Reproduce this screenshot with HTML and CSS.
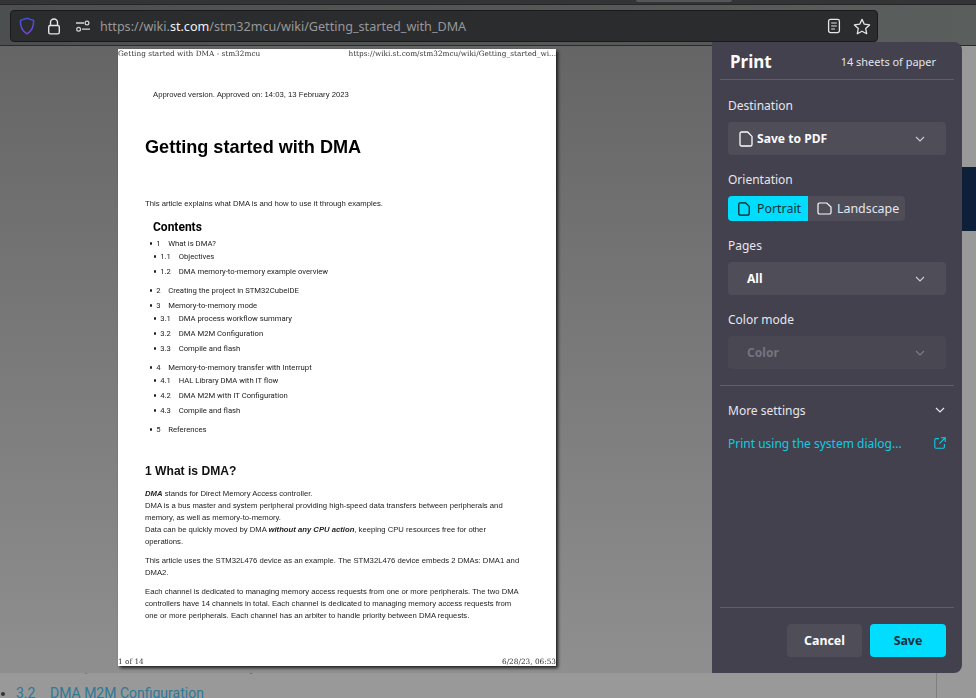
FILE: index.html
```html
<!DOCTYPE HTML>
<html>
<head>
    <meta charset="UTF-8">
    <meta name="viewport" content="width=device-width, initial-scale=1.0">
    <title>Getting started with DMA - stm32mcu</title>
    <link rel="stylesheet" href="styles.css">
</head>
<body>
    <div class="tabstrip"><div class="tab-edge"></div></div>

    <div class="toolbar">
        <div class="urlbar">
            <svg class="shield" width="16" height="18" viewBox="0 0 16 18">
                <defs>
                    <linearGradient id="shieldGrad" x1="0" y1="0" x2="0" y2="1">
                        <stop offset="0" stop-color="#3a52d8"/>
                        <stop offset="1" stop-color="#7a45d8"/>
                    </linearGradient>
                </defs>
                <path d="M8 1.2 L14.6 3.4 C14.8 9.5 12.8 14 8 16.8 C3.2 14 1.2 9.5 1.4 3.4 Z" fill="none" stroke="url(#shieldGrad)" stroke-width="1.5" stroke-linejoin="round"/>
            </svg>
            <svg class="lock" width="14" height="17" viewBox="0 0 14 17">
                <path d="M3.5 7.5 V4.5 a3.5 3.5 0 0 1 7 0 V7.5" fill="none" stroke="#e6e6e8" stroke-width="1.4"/>
                <rect x="1.7" y="7.5" width="10.6" height="8.4" rx="1.6" fill="none" stroke="#e6e6e8" stroke-width="1.4"/>
            </svg>
            <svg class="sliders" width="16" height="12" viewBox="0 0 16 12">
                <path d="M1 3 H9 M7 9.2 H15" fill="none" stroke="#d6d6d8" stroke-width="1.3"/>
                <circle cx="12" cy="3" r="1.9" fill="none" stroke="#d6d6d8" stroke-width="1.2"/>
                <circle cx="3.6" cy="9.2" r="1.9" fill="none" stroke="#d6d6d8" stroke-width="1.2"/>
            </svg>
            <div class="url">https://wiki.<span class="url-host">st.com</span>/stm32mcu/wiki/Getting_started_with_DMA</div>
            <svg class="reader" width="14" height="16" viewBox="0 0 14 16">
                <rect x="1.6" y="1.4" width="10.8" height="13.2" rx="1.8" fill="none" stroke="#e6e6e8" stroke-width="1.3"/>
                <path d="M4.2 5 H9.8 M4.2 8 H9.8 M4.2 11 H8" stroke="#e6e6e8" stroke-width="1.2"/>
            </svg>
            <svg class="star" width="18" height="17" viewBox="0 0 18 17">
                <path d="M9 1.4 L11.3 6.2 L16.6 6.9 L12.7 10.5 L13.7 15.7 L9 13.2 L4.3 15.7 L5.3 10.5 L1.4 6.9 L6.7 6.2 Z" fill="none" stroke="#e6e6e8" stroke-width="1.3" stroke-linejoin="round"/>
            </svg>
        </div>
    </div>

    <div class="wiki">
        <div class="wiki-content">
            <ul class="wiki-list">
                <li><span class="wiki-num">3.1</span>DMA process workflow summary</li>
                <li><span class="wiki-num">3.2</span>DMA M2M Configuration</li>
            </ul>
        </div>
        <div class="wiki-side"><div class="wiki-banner"></div></div>
    </div>

    <div class="dialog">
        <div class="preview">
            <div class="sheet">
                <div class="sheet-head">
                    <span>Getting started with DMA - stm32mcu</span>
                    <span>https://wiki.st.com/stm32mcu/wiki/Getting_started_wi...</span>
                </div>
                <div class="sheet-body">
                    <p class="approved">Approved version. Approved on: 14:03, 13 February 2023</p>
                    <h1>Getting started with DMA</h1>
                    <p class="intro">This article explains what DMA is and how to use it through examples.</p>

                    <h2 class="toc-title">Contents</h2>
                    <ul class="toc">
                        <li class="toc-top"><span>1</span>What is DMA?</li>
                        <li class="toc-sub"><span>1.1</span>Objectives</li>
                        <li class="toc-sub"><span>1.2</span>DMA memory-to-memory example overview</li>
                        <li class="toc-top gap"><span>2</span>Creating the project in STM32CubeIDE</li>
                        <li class="toc-top next"><span>3</span>Memory-to-memory mode</li>
                        <li class="toc-sub"><span>3.1</span>DMA process workflow summary</li>
                        <li class="toc-sub"><span>3.2</span>DMA M2M Configuration</li>
                        <li class="toc-sub"><span>3.3</span>Compile and flash</li>
                        <li class="toc-top gap"><span>4</span>Memory-to-memory transfer with Interrupt</li>
                        <li class="toc-sub"><span>4.1</span>HAL Library DMA with IT flow</li>
                        <li class="toc-sub"><span>4.2</span>DMA M2M with IT Configuration</li>
                        <li class="toc-sub"><span>4.3</span>Compile and flash</li>
                        <li class="toc-top gap"><span>5</span>References</li>
                    </ul>

                    <h2 class="section">1 What is DMA?</h2>
                    <p class="para"><b><i>DMA</i></b> stands for Direct Memory Access controller.<br>
                    DMA is a bus master and system peripheral providing high-speed data transfers between peripherals and<br>
                    memory, as well as memory-to-memory.<br>
                    Data can be quickly moved by DMA <b><i>without any CPU action</i></b>, keeping CPU resources free for other<br>
                    operations.</p>
                    <p class="para">This article uses the STM32L476 device as an example. The STM32L476 device embeds 2 DMAs: DMA1 and<br>
                    DMA2.</p>
                    <p class="para">Each channel is dedicated to managing memory access requests from one or more peripherals. The two DMA<br>
                    controllers have 14 channels in total. Each channel is dedicated to managing memory access requests from<br>
                    one or more peripherals. Each channel has an arbiter to handle priority between DMA requests.</p>
                </div>
                <div class="sheet-foot">
                    <span>1 of 14</span>
                    <span>6/28/23, 06:53</span>
                </div>
            </div>
        </div>

        <div class="panel">
            <div class="panel-head">
                <div class="panel-title">Print</div>
                <div class="sheet-count">14 sheets of paper</div>
            </div>

            <div class="panel-body">
                <div class="field-label">Destination</div>
                <div class="select">
                    <svg class="doc" width="14" height="16" viewBox="0 0 14 16">
                        <path d="M2.6 1 H8.6 L13 5.4 V13.4 a1.6 1.6 0 0 1 -1.6 1.6 H2.6 A1.6 1.6 0 0 1 1 13.4 V2.6 A1.6 1.6 0 0 1 2.6 1 Z" fill="none" stroke="#fbfbfe" stroke-width="1.3"/>
                    </svg>
                    <span class="select-value">Save to PDF</span>
                    <svg class="chevron" width="10" height="6" viewBox="0 0 10 6"><path d="M1 1 L5 5 L9 1" fill="none" stroke="#cfcfd6" stroke-width="1.1"/></svg>
                </div>

                <div class="field-label">Orientation</div>
                <div class="toggle">
                    <div class="toggle-item active">
                        <svg width="12" height="14" viewBox="0 0 12 14">
                            <path d="M2 .8 H7.6 L11.2 4.4 V11.6 a1.6 1.6 0 0 1 -1.6 1.6 H2 A1.3 1.3 0 0 1 .8 11.6 V2.2 A1.3 1.3 0 0 1 2 .8 Z" fill="none" stroke="#15141a" stroke-width="1.2"/>
                        </svg>
                        Portrait
                    </div>
                    <div class="toggle-item">
                        <svg width="15" height="13" viewBox="0 0 15 13">
                            <path d="M2.4 1 H9.8 L14 5 V10.4 a1.6 1.6 0 0 1 -1.6 1.6 H2.4 A1.5 1.5 0 0 1 1 10.4 V2.6 A1.5 1.5 0 0 1 2.4 1 Z" fill="none" stroke="#fbfbfe" stroke-width="1.2"/>
                        </svg>
                        Landscape
                    </div>
                </div>

                <div class="field-label">Pages</div>
                <div class="select plain">
                    <span class="select-value">All</span>
                    <svg class="chevron" width="10" height="6" viewBox="0 0 10 6"><path d="M1 1 L5 5 L9 1" fill="none" stroke="#cfcfd6" stroke-width="1.1"/></svg>
                </div>

                <div class="field-label">Color mode</div>
                <div class="select plain disabled">
                    <span class="select-value">Color</span>
                    <svg class="chevron" width="10" height="6" viewBox="0 0 10 6"><path d="M1 1 L5 5 L9 1" fill="none" stroke="#cfcfd6" stroke-width="1.1"/></svg>
                </div>
            </div>

            <div class="panel-more">
                <div class="more-row">
                    <span>More settings</span>
                    <svg width="10" height="6" viewBox="0 0 10 6"><path d="M1 1 L5 5 L9 1" fill="none" stroke="#e6e6ea" stroke-width="1.2"/></svg>
                </div>
                <div class="system-row">
                    <span>Print using the system dialog...</span>
                    <svg width="12" height="12" viewBox="0 0 12 12">
                        <path d="M5 1.6 H2 A1.2 1.2 0 0 0 .8 2.8 V10 A1.2 1.2 0 0 0 2 11.2 H9.2 A1.2 1.2 0 0 0 10.4 10 V7" fill="none" stroke="#12c9e3" stroke-width="1.1"/>
                        <path d="M7 .8 H11.2 V5 M11 1 L5.4 6.6" fill="none" stroke="#12c9e3" stroke-width="1.1"/>
                    </svg>
                </div>
            </div>

            <div class="panel-foot">
                <button class="btn">Cancel</button>
                <button class="btn primary">Save</button>
            </div>
        </div>
    </div>
</body>
</html>
```

FILE: styles.css
```css
html, body {
    height: 100%;
    margin: 0;
}

body {
    position: relative;
    width: 976px;
    height: 698px;
    overflow: hidden;
    display: flex;
    flex-direction: column;
    background-color: #999;
    font-family: "Noto Sans", sans-serif;
}

.tabstrip {
    height: 5px;
    background-color: #333435;
    border-bottom: 1px solid #262627;
    box-sizing: border-box;
}

.tab-edge {
    width: 96px;
    height: 2px;
    margin-left: 636px;
    background-color: #565658;
    border-radius: 0 0 3px 3px;
}

.toolbar {
    height: 41px;
    box-sizing: border-box;
    padding: 5px 98px 4px 10px;
    background: linear-gradient(90deg, #4b4f4f, #5a5e5d);
    border-bottom: 1px solid #2a2a2a;
}

.urlbar {
    height: 32px;
    box-sizing: border-box;
    display: flex;
    align-items: center;
    background-color: #2b2c2e;
    border: 1px solid #1a1a1b;
    border-radius: 4px;
    padding-left: 8px;
}

.lock {
    margin-left: 12px;
}

.sliders {
    margin-left: 14px;
}

.url {
    margin-left: 9px;
    flex: 1;
    color: #97989b;
    font-size: 12.6px;
    white-space: nowrap;
}

.url-host {
    color: #f2f2f4;
}

.star {
    margin: 0 6px 0 12px;
}

/* page behind the print dialog */
.wiki {
    flex: 1;
    display: flex;
    overflow: hidden;
}

.wiki-content {
    width: 936px;
    flex-shrink: 0;
    border-right: 1px solid #7f7f7f;
}

.wiki-list {
    margin: 607px 0 0;
    padding: 0 0 0 16px;
    font-family: Roboto, sans-serif;
    font-size: 14px;
    line-height: 27px;
    color: #2f7896;
}

.wiki-list li::marker {
    color: #333;
}

.wiki-num {
    display: inline-block;
    width: 34px;
}

.wiki-side {
    flex: 1;
}

.wiki-banner {
    height: 64px;
    margin-top: 121px;
    margin-left: 25px;
    background-color: #0e2039;
}

/* print dialog */
.dialog {
    position: absolute;
    top: 46px;
    left: 0;
    width: 962px;
    height: 627px;
    display: flex;
}

.preview {
    flex: 1;
    padding: 3px 0 0 118px;
    background: linear-gradient(180deg, #656565, #8f8f8f);
}

.sheet {
    width: 438px;
    height: 617px;
    display: flex;
    flex-direction: column;
    background-color: #fff;
    box-shadow: 2px 2px 3px #1d1d1d;
    font-family: "Liberation Sans", sans-serif;
    font-size: 7.7px;
    line-height: 12px;
    color: #222;
    filter: blur(0.25px);
}

.sheet-head, .sheet-foot {
    display: flex;
    justify-content: space-between;
    font-family: "DejaVu Serif", serif;
    font-size: 7.34px;
    line-height: 9px;
    color: #333;
}

.sheet-foot {
    margin-top: auto;
    line-height: 8px;
}

.sheet-body {
    padding: 0 27px;
}

.sheet-body p {
    margin: 0;
}

.approved {
    padding: 31px 0 0 8px;
}

.sheet-body h1 {
    margin: 34px 0 0;
    font-size: 18.1px;
    line-height: 24px;
    color: #000;
}

.intro {
    padding-top: 39px;
}

.toc-title {
    margin: 10px 0 0 8px;
    font-family: Roboto, sans-serif;
    font-size: 12px;
    line-height: 14px;
    color: #000;
}

.toc {
    margin: 0;
    padding: 3px 0 0;
    list-style: none;
    font-family: Roboto, sans-serif;
    font-size: 7.7px;
    line-height: 13px;
}

.toc li::before {
    content: "";
    display: inline-block;
    width: 2.2px;
    height: 2.2px;
    margin-right: 4px;
    border-radius: 50%;
    background-color: #222;
    vertical-align: 1.5px;
}

.toc-top {
    padding-left: 5px;
}

.toc-top span {
    display: inline-block;
    width: 12px;
}

.toc-sub {
    padding-left: 9px;
    margin-bottom: 2px;
}

.toc-sub span {
    display: inline-block;
    width: 18.5px;
}

.toc-top.gap {
    margin-top: 6px;
}

.toc-top.next {
    margin-top: 2px;
}

.sheet-body h2.section {
    margin: 27px 0 0;
    font-size: 12.1px;
    line-height: 16px;
    color: #111;
}

.para {
    margin-bottom: 7px !important;
}

.section + .para {
    margin-top: 9px !important;
}

/* settings panel */
.panel {
    width: 250px;
    margin-top: -4px;
    box-sizing: border-box;
    display: flex;
    flex-direction: column;
    background-color: #42414d;
    border-radius: 0 8px 8px 0;
    color: #fbfbfe;
    font-size: 13px;
}

.panel-head {
    height: 38px;
    box-sizing: border-box;
    margin: 0 8px;
    padding: 2px 18px 0 10px;
    display: flex;
    justify-content: space-between;
    align-items: center;
    border-bottom: 1px solid #5f5e69;
}

.panel-title {
    font-size: 17px;
    font-weight: 700;
}

.sheet-count {
    font-size: 10.95px;
    color: #e4e4ea;
}

.panel-body {
    padding: 15px 16px 16px;
}

.field-label {
    line-height: 22px;
    height: 20px;
    margin-bottom: 7px;
    font-size: 12px;
    color: #e6e6ee;
}

.select {
    height: 33px;
    display: flex;
    align-items: center;
    margin-bottom: 14px;
    padding: 0 21px 0 11px;
    background-color: #4e4d58;
    border-radius: 4px;
    font-weight: 700;
    font-size: 12.1px;
}

.select.plain {
    padding-left: 19px;
}

.select:last-child {
    margin-bottom: 0;
}

.select.disabled {
    background-color: #484752;
    color: #75747f;
}

.select.disabled .chevron {
    opacity: 0.4;
}

.select-value {
    flex: 1;
}

.doc {
    margin-right: 4px;
}

.toggle {
    display: inline-flex;
    height: 25px;
    margin-bottom: 14px;
    background-color: #4e4d58;
    border-radius: 4px;
    font-size: 12.4px;
    vertical-align: top;
}

.toggle-item {
    display: flex;
    align-items: center;
    gap: 5px;
    padding: 0 0 0 9px;
    width: 97px;
    box-sizing: border-box;
    color: #e6e6ee;
}

.toggle-item svg {
    flex-shrink: 0;
}

.toggle-item.active {
    width: 80px;
    padding-left: 10px;
    gap: 7px;
    background-color: #00ddff;
    color: #15303a;
    border-radius: 4px 0 0 4px;
}

.panel-more {
    margin: 0 8px;
    padding: 14px 8px 0;
    border-top: 1px solid #5f5e69;
    flex: 1;
    font-size: 12px;
}

.more-row, .system-row {
    display: flex;
    justify-content: space-between;
    align-items: center;
    height: 20px;
}

.more-row {
    padding-right: 1px;
    color: #e6e6ee;
}

.system-row {
    margin-top: 13px;
    color: #12c9e3;
}

.panel-foot {
    margin: 0 8px;
    padding: 16px 8px;
    display: flex;
    justify-content: flex-end;
    gap: 8px;
    border-top: 1px solid #5f5e69;
}

.btn {
    width: 75px;
    height: 33px;
    border: 0;
    border-radius: 4px;
    background-color: #4e4d58;
    color: #fbfbfe;
    font-family: "Noto Sans", sans-serif;
    font-size: 12.4px;
    font-weight: 700;
}

.btn.primary {
    width: 76px;
    background-color: #00ddff;
    color: #15303a;
}
```
